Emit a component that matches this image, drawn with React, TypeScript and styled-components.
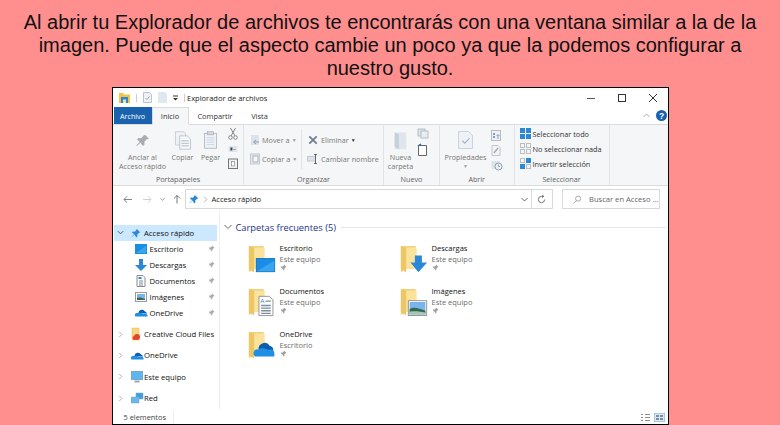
import React from "react";
import styled, { createGlobalStyle } from "styled-components";

const Global = createGlobalStyle`
  html, body { margin: 0; padding: 0; width: 780px; height: 425px; overflow: hidden; background: #ff8f8f; }
  #root { width: 780px; height: 425px; }
`;
const Page = styled.div`
  width: 780px; height: 425px; background: #ff8f8f; overflow: hidden;
  display: flex; flex-direction: column; align-items: flex-start; font-family: "Liberation Sans", Arial, sans-serif;
`;
const Intro = styled.p`
  margin: 0; padding: 11px 20px 0; width: 740px; height: 76px; box-sizing: content-box; text-align: center;
  font-size: 20px; line-height: 23px; color: #111; flex: none;
`;
const Win = styled.div`
  width: 557px; height: 338px; box-sizing: border-box; margin-left: 112px; border: 1.5px solid #000; border-bottom: 1px solid #000; background: #fff;
  display: flex; flex-direction: column; font-family: "Open Sans", "Noto Sans", sans-serif; font-size: 7.6px; color: #222; flex: none; overflow: hidden;
`;
const TitleBar = styled.div`height: 19px; display: flex; align-items: center; padding-left: 6px; flex: none;`;
const QuickIcons = styled.div`display: flex; align-items: center; gap: 6px; width: 68px;`;
const Sep = styled.span`width: 1px; height: 8px; background: #ccc;`;
const TitleText = styled.span`flex: 1; font-size: 7.5px; color: #222;`;
const WinControls = styled.div`display: flex; height: 19px;`;
const WinBtn = styled.div`width: 31px; display: flex; align-items: center; justify-content: center;`;
const TabRow = styled.div`height: 17px; display: flex; align-items: stretch; padding-left: 0.5px; flex: none; position: relative;`;
const FileTab = styled.div`width: 38px; background: #1a62ae; color: #fff; display: flex; align-items: center; justify-content: center; font-size: 7.2px;`;
const Tab = styled.div<{ $active?: boolean; $w: number }>`
  width: ${p => p.$w}px; display: flex; align-items: center; justify-content: center; font-size: 7.4px; color: #333;
  ${p => p.$active ? "border: 1px solid #dadbdc; border-bottom: 1px solid #f5f6f7; background:#f5f6f7; margin-bottom:-1px; box-sizing:border-box;" : ""}
`;
const HelpZone = styled.div`margin-left: auto; display: flex; align-items: center; gap: 6px; padding-right: 1px;`;
const Ribbon = styled.div`height: 62px; background: #f5f6f7; border-top: 1px solid #dadbdc; border-bottom: 1px solid #dadbdc; display: flex; box-sizing: border-box; flex: none;`;
const Group = styled.div<{ $w: number }>`width: ${p => p.$w}px; flex: none; border-right: 1px solid #e2e3e4; display: flex; flex-direction: column; box-sizing: border-box;`;
const GroupBody = styled.div<{ $pl?: number }>`flex: 1; display: flex; min-height: 0; padding-left: ${p => p.$pl ?? 0}px;`;
const GroupLabel = styled.div`height: 12px; text-align: center; font-size: 7.2px; line-height: 12px; color: #5f5f5f; flex: none;`;
const Large = styled.div<{ $w: number }>`width: ${p => p.$w}px; flex: none; display: flex; flex-direction: column; align-items: center; padding-top: 5px; text-align: center; color: #767676; font-size: 7.2px; line-height: 9px; svg { margin-bottom: 2.5px; flex: none; }`;
const SmallCol = styled.div<{ $gap?: number; $pt?: number; $pl?: number; $w?: number }>`
  display: flex; flex-direction: column; gap: ${p => p.$gap ?? 4}px; padding-top: ${p => p.$pt ?? 3}px; padding-left: ${p => p.$pl ?? 0}px;
  align-items: flex-start; ${p => p.$w ? `width: ${p.$w}px; flex: none;` : ""}
`;
const SmallBtn = styled.div<{ $dark?: boolean; $h?: number }>`display: flex; align-items: center; gap: 2px; height: ${p => p.$h ?? 15}px; white-space: nowrap; font-size: 7.3px; color: ${p => p.$dark ? "#333" : "#777"};`;
const VDiv = styled.div`width: 1px; background: #e2e3e4; margin: 4px 5px 4px 1px; flex: none;`;
const Caret = styled.span`font-size: 5px; color: #999;`;
const CaretDark = styled.span`font-size: 5px; color: #333;`;
const AddressRow = styled.div`height: 24px; box-sizing: border-box; display: flex; align-items: center; padding: 2px 0 0 9.5px; flex: none;`;
const NavBtns = styled.div`display: flex; align-items: center; width: 62px; gap: 8px; svg:nth-child(2) { margin-left: 3px; }`;
const AddressBox = styled.div`width: 368px; height: 20px; box-sizing: border-box; border: 1px solid #d9d9d9; display: flex; align-items: center; padding-left: 3px; gap: 3px; font-size: 7.6px; color: #222;`;
const AddrText = styled.span`flex: 1;`;
const AddrEnd = styled.div`width: 20px; height: 18px; border-left: 1px solid #d9d9d9; display: flex; align-items: center; justify-content: center;`;
const SearchBox = styled.div`width: 98px; height: 20px; box-sizing: border-box; margin-left: 9px; border: 1px solid #d9d9d9; display: flex; align-items: center; padding-left: 10px; gap: 8px; font-size: 7.6px; color: #666; white-space: nowrap;`;
const Main = styled.div`flex: 1; display: flex; min-height: 0;`;
const Sidebar = styled.div`width: 106.5px; flex: none; padding-top: 15px; box-sizing: border-box; border-right: 1px solid #f0f0f0;`;
const NavRow = styled.div<{ $sel?: boolean; $h: number; $indent: number; $mb?: number }>`
  height: ${p => p.$h}px; margin-left: ${p => p.$sel ? 0.5 : 0}px; margin-right: 1.5px; display: flex; align-items: center; padding-left: ${p => p.$indent}px; font-size: 7.7px; color: #111; white-space: nowrap; position: relative;
  background: ${p => p.$sel ? "#cce8ff" : "transparent"}; margin-bottom: ${p => p.$mb ?? 0}px;
`;
const NavArrow = styled.span`width: 14px; flex: none; display: flex; justify-content: flex-start;`;
const NavIcon = styled.span<{ $w: number }>`width: ${p => p.$w}px; flex: none; display: flex; align-items: center;`;
const NavPin = styled.span`margin-left: auto; padding-right: 2px; display: flex;`;
const Content = styled.div`flex: 1; padding: 9px 2px 0 4px; min-width: 0;`;
const Section = styled.div`display: flex; align-items: center; gap: 4px; height: 16px; font-size: 9.3px; color: #1e3287; white-space: nowrap;`;
const Rule = styled.span`flex: 1; height: 1px; background: #e6e6e6; margin-left: 1px;`;
const Grid = styled.div`display: grid; grid-template-columns: 152px 152px; grid-auto-rows: 43px; padding-left: 24px;`;
const Tile = styled.div`display: flex;`;
const TileIcon = styled.div`width: 32px; flex: none; padding-top: 9px;`;
const TileText = styled.div`display: flex; flex-direction: column; align-items: flex-start; font-size: 7.5px; line-height: 10.5px; padding-top: 8px; color: #111;`;
const TileSub = styled.span`color: #6d6d6d;`;
const Status = styled.div`height: 15px; box-sizing: border-box; display: flex; align-items: center; padding: 1px 0 0 10.5px; font-size: 7.4px; color: #444; flex: none;`;
const StatusText = styled.span`width: 49px; border-right: 1px solid #eee; line-height: 13px;`;
const StatusIcons = styled.div`margin-left: auto; padding-right: 3px; display: flex; gap: 3px;`;

const pinPath = "M9 1l6 6-2 .5-3 3 .2 3L8.500 15 5.500 10.500 1.500 14.500 1 14l4-4L1.500 7l1.500-1.500 3 .3 3-3z";
const Pin = ({ c = "#8a8a8a", s = 8 }: { c?: string; s?: number }) => (
  <svg width={s} height={s} viewBox="0 0 16 16"><path d={pinPath} fill={c} /></svg>
);
const BigIcon = ({ children }: { children: React.ReactNode }) => (
  <svg width="28" height="30" viewBox="0 0 32 34">
    <path d="M1 2h17v26H7L1 32z" fill="#f2d27c" />
    <path d="M7 4h12v24H7z" fill="#fbe39b" />
    <path d="M1 2l6 2v28l-6-3z" fill="#edc765" />
    {children}
  </svg>
);
const DesktopBig = () => (
  <BigIcon><rect x="9.500" y="16.500" width="21" height="15" fill="#1a8de6" stroke="#0f6fc0" /><path d="M10 31l20-12v12z" fill="#39a5f0" /></BigIcon>
);
const DownBig = () => (
  <BigIcon><path d="M17 13h8v8h6L21 32 12 21h5z" fill="#2b88d8" /></BigIcon>
);
const DocsBig = () => (
  <BigIcon><path d="M12.500 10.500h12l4 4v18h-16z" fill="#fff" stroke="#8a8a8a" /><text x="14" y="18" fontSize="7" fill="#2b88d8" fontFamily="Liberation Sans">A</text><path d="M20 16h6M15 21h11M15 24h11M15 27h11M15 30h11" stroke="#7c8ea0" strokeWidth="1.500" /></BigIcon>
);
const PicsBig = () => (
  <BigIcon><rect x="9.500" y="15.500" width="21" height="17" fill="#fff" stroke="#8a8a8a" /><rect x="11" y="17" width="18" height="14" fill="#7ab4ea" /><path d="M11 25c5-3 10-1 18 2v4H11z" fill="#2f6b4f" /><path d="M11 28c7-1 12 0 18 1v2H11z" fill="#a8c4b8" /></BigIcon>
);
const CloudBig = () => (
  <BigIcon><path d="M12 22a7 7 0 0 1 13-4 5 5 0 0 1 4 5z" fill="#0b5cad" /><path d="M8 30a4.500 4.500 0 0 1 3-8c3-1 5-2 8-1 3 1 4 2 6 1 4-1 6 3 5 8z" fill="#1f8fe6" /></BigIcon>
);
const Cloud = () => (
  <svg width="13" height="9" viewBox="0 0 26 18"><path d="M7 10a7 7 0 0 1 13-3 5 5 0 0 1 4 4z" fill="#0b5cad" /><path d="M1 17a4 4 0 0 1 3-7c3-1 6-1 9 0 3 2 5 1 7 1 4 0 6 3 5 6z" fill="#1f8fe6" /></svg>
);
const Star = ({ s = 10 }: { s?: number }) => (
  <svg width={s} height={s} viewBox="0 0 16 16"><path d={pinPath} fill="#2b88d8" /></svg>
);
const Chevron = ({ open }: { open?: boolean }) => (
  <svg width="7" height="7" viewBox="0 0 8 8" fill="none" stroke={open ? "#444" : "#a6a6a6"} strokeWidth="1">
    <path d={open ? "M1 2.500l3 3 3-3" : "M2.500 1l3 3-3 3"} />
  </svg>
);
const DesktopSmall = () => (
  <svg width="12" height="10" viewBox="0 0 12 10"><rect width="12" height="10" fill="#1a8de6" /><path d="M1 9l10-7v7z" fill="#3aa6f0" /></svg>
);
const DownSmall = () => (
  <svg width="12" height="12" viewBox="0 0 12 12"><path d="M4 0h4v6h4l-6 6-6-6h4z" fill="#2b88d8" /></svg>
);
const DocSmall = () => (
  <svg width="12" height="12" viewBox="0 0 12 12"><path d="M2 .5h6l2 2v9H2z" fill="#fff" stroke="#8a8a8a" /><path d="M4 6h4M4 8h4M4 10h4" stroke="#7c8ea0" /><path d="M3.500 2h3v2h-3z" fill="#2b88d8" /></svg>
);
const PicSmall = () => (
  <svg width="12" height="10" viewBox="0 0 12 10"><rect x=".5" y=".5" width="11" height="9" fill="#fff" stroke="#999" /><rect x="2" y="2" width="8" height="6" fill="#7ab4ea" /><path d="M2 6c3-1 5 0 8 1v1H2z" fill="#2f6b4f" /></svg>
);
const CCFolder = () => (
  <svg width="12" height="14" viewBox="0 0 12 14"><path d="M1 1h7v12H1z" fill="#f6d67f" stroke="#e2bd5a" strokeWidth=".5" /><circle cx="6" cy="10" r="3" fill="#e8412a" /><circle cx="3.500" cy="11" r="2" fill="#e8412a" /></svg>
);
const PC = () => (
  <svg width="13" height="12" viewBox="0 0 13 12"><rect x=".5" y=".5" width="11" height="8" fill="#5cb7ee" stroke="#7ba7c4" /><path d="M3.500 10.500h5" stroke="#9aa7b0" strokeWidth="2" /></svg>
);
const Net = () => (
  <svg width="13" height="12" viewBox="0 0 13 12"><rect x="5" y="1" width="7" height="6" fill="#3f9ee0" stroke="#7ba7c4" strokeWidth=".5" /><rect x="0" y="5" width="8" height="6" fill="#67b7ee" stroke="#7ba7c4" strokeWidth=".5" /></svg>
);
const PinGray = () => <Pin c="#aaaaaa" s={7} />;

const LargeIconPin = () => (
  <svg width="16" height="20" viewBox="0 -4 24 30"><path d="M15 3l6 6-3 .8-4 4 .3 4L12 20l-4-5-5 5-1-1 5-5-4-4 2-2 4 .4 4-4z" fill="#a9adb3" /></svg>
);
const LargeCopy = () => (
  <svg width="18" height="20" viewBox="0 0 20 24"><path d="M1 2h10l2 2v14H1z" fill="#eef1f5" stroke="#c4cad2" /><path d="M6 7h9l4 4v12H6z" fill="#f5f7f9" stroke="#b6bec8" /><path d="M8 13h9M8 16h9M8 19h9" stroke="#aab3bf" /></svg>
);
const LargePaste = () => (
  <svg width="15" height="20" viewBox="0 0 20 24"><rect x="2" y="3" width="16" height="20" fill="#eef1f5" stroke="#a8afb8" /><rect x="6" y="1" width="8" height="4" fill="#d6dadf" stroke="#a8afb8" /><path d="M5 9h10M5 12h10M5 15h10M5 18h10" stroke="#c2d2e2" /></svg>
);
const Scissors = () => (
  <svg width="10" height="12" viewBox="0 0 10 12" fill="none" stroke="#888"><path d="M2.500 0l4.500 8M7.500 0L3 8" /><circle cx="2.500" cy="9.500" r="1.800" /><circle cx="7.500" cy="9.500" r="1.800" /></svg>
);
const MiniPath = () => (
  <svg width="10" height="6" viewBox="0 0 10 7"><rect width="10" height="7" fill="#dfe5ec" /><path d="M2 2h2v3H2zM5 4h3" stroke="#8a97a6" /></svg>
);
const MiniPaste = () => (
  <svg width="10" height="11" viewBox="0 0 10 11"><rect x=".5" y="1" width="9" height="9.500" fill="#eef1f5" stroke="#777" /><rect x="3.500" y="3.500" width="3" height="4.500" fill="#fff" stroke="#888" strokeWidth=".7" /></svg>
);
const MoveIco = () => (
  <svg width="10" height="12" viewBox="0 0 10 12"><rect x="1" y="1" width="8" height="10" fill="#dde3ea" /><path d="M9 8H4M6 6L3.500 8 6 10" fill="none" stroke="#8ca0b6" /></svg>
);
const CopyIco = () => (
  <svg width="10" height="12" viewBox="0 0 10 12"><rect x=".5" y="1" width="9" height="10" fill="#e6eaef" stroke="#c4cad2" /><rect x="3" y="3" width="5" height="6" fill="#f6f7f8" stroke="#aab3bf" /></svg>
);
const DelIco = () => (
  <svg width="12" height="10" viewBox="-1.500 0 13 10" stroke="#6e7f92" strokeWidth="2"><path d="M1 1l8 8M9 1L1 9" /></svg>
);
const RenameIco = () => (
  <svg width="12" height="10" viewBox="0 0 12 10" fill="none"><rect x=".5" y="2.500" width="8" height="4.500" fill="#dde3ea" stroke="#c4cad2" /><path d="M8.500 0v10M7 .5h3M7 9.500h3" stroke="#666" /></svg>
);
const NewFolder = () => (
  <svg width="15" height="20" viewBox="0 -2 18 24"><path d="M2 1h14v20H2z" fill="#dfe5ec" /><path d="M2 1l5 2v18l-5-3z" fill="#c7d0da" /></svg>
);
const TinyDoc = () => (
  <svg width="12" height="11" viewBox="0 0 12 11"><rect x="1" y="1" width="7" height="7" fill="#dde3ea" stroke="#b5bdc7" /><rect x="4" y="3" width="7" height="7" fill="#e9edf1" stroke="#b5bdc7" /></svg>
);
const TinyNew = () => (
  <svg width="11" height="13" viewBox="0 0 11 13"><path d="M1.500 2.500h8v10h-8z" fill="#fff" stroke="#666" /><path d="M1 3l3-2" stroke="#2b6cb0" strokeWidth="1.500" /></svg>
);
const PropsIco = () => (
  <svg width="17" height="20" viewBox="0 0 22 24" fill="none"><path d="M2 1h13l5 5v17H2z" fill="#eef2f7" stroke="#bcc8d6" /><path d="M7 13l3 3 6-6" stroke="#a7b4c3" strokeWidth="1.500" /></svg>
);
const OpenIco = () => (
  <svg width="10" height="11" viewBox="0 0 10 11"><rect x=".5" y=".5" width="9" height="10" fill="#eef1f4" stroke="#bbb" /><path d="M2 3h2v2H2zM2 6h2v2H2z" fill="#8ea0b2" /><path d="M7 9V5M5.500 6L7 4.500 8.500 6" stroke="#7ba7c4" fill="none" /></svg>
);
const EditIco = () => (
  <svg width="10" height="11" viewBox="0 0 10 11" fill="none"><path d="M1 .5h6l2 2v8H1z" fill="#f2f4f6" stroke="#c0c6cd" /><path d="M3 8l4-5" stroke="#a0aab5" strokeWidth="1.400" /></svg>
);
const HistoryIco = () => (
  <svg width="12" height="11" viewBox="0 0 12 11"><rect x=".5" y="1" width="8" height="8" fill="#dde3ea" /><circle cx="7.500" cy="6.500" r="3.500" fill="#eef1f4" stroke="#8ea0b2" /><path d="M7.500 4.500v2h1.500" stroke="#8ea0b2" fill="none" /></svg>
);
const SelAll = ({ fill }: { fill: [string, string, string, string] }) => (
  <svg width="11" height="11" viewBox="0 0 11 11" fill="none">
    {[[0, 0], [6, 0], [0, 6], [6, 6]].map(([x, y], i) => (
      <rect key={i} x={x + .5} y={y + .5} width="4" height="4" fill={fill[i]} stroke={fill[i] === "none" ? "#b8bec6" : "#2b88d8"} />
    ))}
  </svg>
);

type Item = { name: string; sub: string; Icon: React.FC };
const items: Item[] = [
  { name: "Escritorio", sub: "Este equipo", Icon: DesktopBig },
  { name: "Descargas", sub: "Este equipo", Icon: DownBig },
  { name: "Documentos", sub: "Este equipo", Icon: DocsBig },
  { name: "Imágenes", sub: "Este equipo", Icon: PicsBig },
  { name: "OneDrive", sub: "Escritorio", Icon: CloudBig },
];
const quick = [
  { n: "Escritorio", I: DesktopSmall }, { n: "Descargas", I: DownSmall }, { n: "Documentos", I: DocSmall },
  { n: "Imágenes", I: PicSmall }, { n: "OneDrive", I: Cloud },
];
const roots = [
  { n: "Creative Cloud Files", I: CCFolder }, { n: "OneDrive", I: Cloud }, { n: "Este equipo", I: PC }, { n: "Red", I: Net },
];

export default function App() {
  return (
    <Page>
      <Global />
      <Intro>Al abrir tu Explorador de archivos te encontrarás con una ventana similar a la de la imagen. Puede que el aspecto cambie un poco ya que la podemos configurar a nuestro gusto.</Intro>
      <Win>
        <TitleBar>
          <QuickIcons>
            <svg width="11" height="10" viewBox="0 0 11 10"><path d="M0 0h4l1 1.500h6V10H0z" fill="#f4c542" /><rect x="2" y="4" width="7" height="6" fill="#2b88d8" /><rect x="4" y="6.500" width="3" height="3.500" fill="#f4e0a0" /></svg>
            <Sep />
            <svg width="9" height="11" viewBox="0 0 9 11"><path d="M.5.500h6l2 2v8h-8z" fill="#eef3f8" stroke="#b8c4d0" /><path d="M2.500 6l1.500 1.500 2.500-3" stroke="#9aa9b8" fill="none" /></svg>
            <svg width="9" height="11" viewBox="0 0 9 11"><path d="M0 0h7l2 2v9H0z" fill="#dfe7f1" /></svg>
            <svg width="5" height="6" viewBox="0 0 5 6"><path d="M0 1h5" stroke="#333" /><path d="M0 3h5L2.500 5.500z" fill="#333" /></svg>
            <Sep />
          </QuickIcons>
          <TitleText>Explorador de archivos</TitleText>
          <WinControls>
            <WinBtn><svg width="10" height="10"><path d="M1 5.500h8" stroke="#555" /></svg></WinBtn>
            <WinBtn><svg width="10" height="10"><rect x="1.500" y="1.500" width="7" height="7" fill="none" stroke="#333" /></svg></WinBtn>
            <WinBtn><svg width="10" height="10"><path d="M1 1l8 8M9 1L1 9" stroke="#333" /></svg></WinBtn>
          </WinControls>
        </TitleBar>
        <TabRow>
          <FileTab>Archivo</FileTab>
          <Tab $active $w={37}>Inicio</Tab>
          <Tab $w={53}>Compartir</Tab>
          <Tab $w={36}>Vista</Tab>
          <HelpZone>
            <svg width="7" height="5" viewBox="0 0 7 5"><path d="M.5 4L3.500 1 6.500 4" fill="none" stroke="#aaa" /></svg>
            <svg width="11" height="11" viewBox="0 0 11 11"><circle cx="5.500" cy="5.500" r="5.500" fill="#1a62ae" /><text x="5.500" y="8.500" fontSize="8.500" fontWeight="700" fill="#fff" textAnchor="middle" fontFamily="Liberation Sans">?</text></svg>
          </HelpZone>
        </TabRow>
        <Ribbon>
          <Group $w={131}>
            <GroupBody $pl={5}>
              <Large $w={49}><LargeIconPin />Anclar al<br />Acceso rápido</Large>
              <Large $w={31}><LargeCopy />Copiar</Large>
              <Large $w={25}><LargePaste />Pegar</Large>
              <SmallCol $gap={6} $pt={3} $pl={5}><Scissors /><MiniPath /><MiniPaste /></SmallCol>
            </GroupBody>
            <GroupLabel>Portapapeles</GroupLabel>
          </Group>
          <Group $w={140}>
            <GroupBody>
              <SmallCol $gap={4} $pt={7} $pl={6} $w={50}>
                <SmallBtn><MoveIco />Mover a <Caret>▼</Caret></SmallBtn>
                <SmallBtn><CopyIco />Copiar a <Caret>▼</Caret></SmallBtn>
              </SmallCol>
              <VDiv />
              <SmallCol $gap={4} $pt={7}>
                <SmallBtn><DelIco />Eliminar <CaretDark>▼</CaretDark></SmallBtn>
                <SmallBtn><RenameIco />Cambiar nombre</SmallBtn>
              </SmallCol>
            </GroupBody>
            <GroupLabel>Organizar</GroupLabel>
          </Group>
          <Group $w={56}>
            <GroupBody>
              <Large $w={33}><NewFolder />Nueva<br />carpeta</Large>
              <SmallCol $gap={4} $pt={3}><TinyDoc /><TinyNew /></SmallCol>
            </GroupBody>
            <GroupLabel>Nuevo</GroupLabel>
          </Group>
          <Group $w={74.5}>
            <GroupBody>
              <Large $w={51}><PropsIco />Propiedades<Caret>▼</Caret></Large>
              <SmallCol $gap={4} $pt={5}><OpenIco /><EditIco /><HistoryIco /></SmallCol>
            </GroupBody>
            <GroupLabel>Abrir</GroupLabel>
          </Group>
          <Group $w={95}>
            <GroupBody>
              <SmallCol $gap={0} $pt={1} $pl={5}>
                <SmallBtn $dark><SelAll fill={["#2b88d8", "#2b88d8", "#2b88d8", "#2b88d8"]} />Seleccionar todo</SmallBtn>
                <SmallBtn $dark><SelAll fill={["none", "none", "none", "none"]} />No seleccionar nada</SmallBtn>
                <SmallBtn $dark><SelAll fill={["none", "#2b88d8", "#2b88d8", "none"]} />Invertir selección</SmallBtn>
              </SmallCol>
            </GroupBody>
            <GroupLabel>Seleccionar</GroupLabel>
          </Group>
        </Ribbon>
        <AddressRow>
          <NavBtns>
            <svg width="9" height="9" viewBox="0 0 10 9" fill="none" stroke="#777"><path d="M10 4.500H1M4.500 1L1 4.500 4.500 8" /></svg>
            <svg width="9" height="9" viewBox="0 0 10 9" fill="none" stroke="#ccc"><path d="M0 4.500h9M5.500 1L9 4.500 5.500 8" /></svg>
            <svg width="5" height="5" viewBox="0 0 6 5" fill="none" stroke="#888"><path d="M.5 1L3 3.500 5.500 1" /></svg>
            <svg width="8" height="10" viewBox="0 0 9 10" fill="none" stroke="#666"><path d="M4.500 10V1M1 4.500L4.500 1 8 4.500" /></svg>
          </NavBtns>
          <AddressBox>
            <Star />
            <Chevron />
            <AddrText>Acceso rápido</AddrText>
            <svg width="7" height="5" viewBox="0 0 7 5" fill="none" stroke="#666"><path d="M.5 1L3.500 4 6.500 1" /></svg>
            <AddrEnd>
              <svg width="9" height="9" viewBox="0 0 10 10" fill="none" stroke="#666"><path d="M8.500 5A3.500 3.500 0 1 1 5 1.500h2M5.500 0L7.500 1.500 5.500 3" /></svg>
            </AddrEnd>
          </AddressBox>
          <SearchBox>
            <svg width="9" height="9" viewBox="0 0 10 10" fill="none" stroke="#999"><circle cx="6" cy="4" r="3" /><path d="M4 6.500L.5 9.500" /></svg>
            Buscar en Acceso ...
          </SearchBox>
        </AddressRow>
        <Main>
          <Sidebar>
            <NavRow $sel $h={15.5} $indent={3.5}>
              <NavArrow><Chevron open /></NavArrow>
              <NavIcon $w={13}><Star /></NavIcon>Acceso rápido
            </NavRow>
            {quick.map(({ n, I }, i) => (
              <NavRow key={i} $h={16} $indent={21.5} $mb={i === 4 ? 3 : 0}>
                <NavIcon $w={15}><I /></NavIcon>{n}<NavPin><PinGray /></NavPin>
              </NavRow>
            ))}
            {roots.map(({ n, I }, i) => (
              <NavRow key={i} $h={21.3} $indent={4}>
                <NavArrow><Chevron /></NavArrow>
                <NavIcon $w={13}><I /></NavIcon>{n}
              </NavRow>
            ))}
          </Sidebar>
          <Content>
            <Section>
              <svg width="8" height="6" viewBox="0 0 8 6" fill="none" stroke="#666"><path d="M.5 1L4 4.500 7.500 1" /></svg>
              Carpetas frecuentes (5)
              <Rule />
            </Section>
            <Grid>
              {items.map(({ name, sub, Icon }) => (
                <Tile key={name}>
                  <TileIcon><Icon /></TileIcon>
                  <TileText>{name}<TileSub>{sub}</TileSub><Pin c="#a0a0a0" s={7} /></TileText>
                </Tile>
              ))}
            </Grid>
          </Content>
        </Main>
        <Status>
          <StatusText>5 elementos</StatusText>
          <StatusIcons>
            <svg width="11" height="9" viewBox="0 0 11 9" fill="none" stroke="#8c8c8c"><path d="M1 1.500h2M5 1.500h5M1 4.500h2M5 4.500h5M1 7.500h2M5 7.500h5" /></svg>
            <svg width="11" height="9" viewBox="0 0 11 9"><rect x="0" y="0" width="11" height="9" fill="#dbe9f5" stroke="#6fa8d8" /><path d="M2 2h3v2H2zM6 2h3v2H6zM2 5h3v2H2zM6 5h3v2H6z" fill="#7c8c9c" /></svg>
          </StatusIcons>
        </Status>
      </Win>
    </Page>
  );
}
